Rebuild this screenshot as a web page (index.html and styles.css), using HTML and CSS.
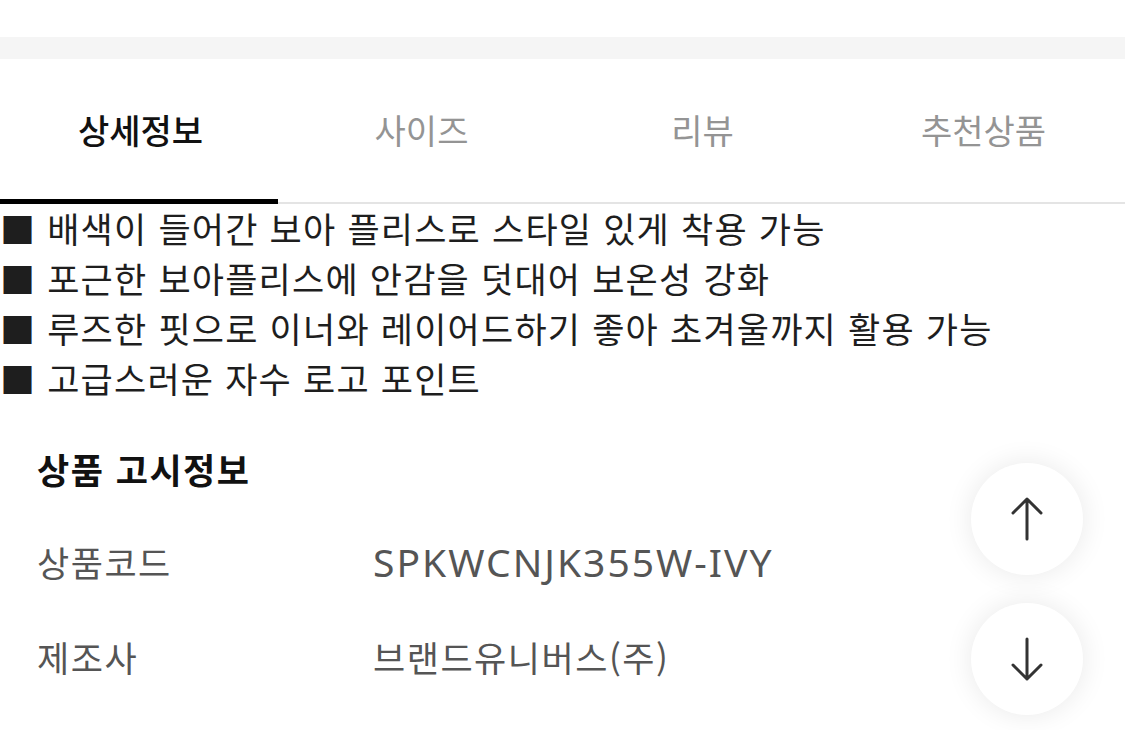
FILE: index.html
```html
<!DOCTYPE html>
<html lang="ko">
<head>
    <meta charset="UTF-8">
    <meta name="viewport" content="width=device-width, initial-scale=1.0">
    <title>상품 상세</title>
    <link rel="stylesheet" href="styles.css">
</head>
<body>

    <!-- Top spacer and divider band -->
    <div class="top-space"></div>
    <div class="band"></div>

    <!-- Tabs -->
    <nav class="tabs">
        <a class="tab active">상세정보</a>
        <a class="tab">사이즈</a>
        <a class="tab">리뷰</a>
        <a class="tab">추천상품</a>
    </nav>

    <!-- Feature list -->
    <ul class="features">
        <li>■ 배색이 들어간 보아 플리스로 스타일 있게 착용 가능</li>
        <li>■ 포근한 보아플리스에 안감을 덧대어 보온성 강화</li>
        <li>■ 루즈한 핏으로 이너와 레이어드하기 좋아 초겨울까지 활용 가능</li>
        <li>■ 고급스러운 자수 로고 포인트</li>
    </ul>

    <!-- Product notice -->
    <section class="notice">
        <h2 class="notice-title">상품 고시정보</h2>
        <div class="notice-row">
            <span class="label">상품코드</span>
            <span class="value code">SPKWCNJK355W-IVY</span>
        </div>
        <div class="notice-row">
            <span class="label">제조사</span>
            <span class="value">브랜드유니버스(주)</span>
        </div>
    </section>

    <!-- Floating scroll buttons -->
    <div class="scroll-buttons">
        <button class="scroll-btn" aria-label="위로">
            <svg width="40" height="48" viewBox="0 0 40 48" fill="none" stroke="#333" stroke-width="3" stroke-linecap="round" stroke-linejoin="round">
                <path d="M20 44V4M6 18L20 4L34 18"/>
            </svg>
        </button>
        <button class="scroll-btn" aria-label="아래로">
            <svg width="40" height="48" viewBox="0 0 40 48" fill="none" stroke="#333" stroke-width="3" stroke-linecap="round" stroke-linejoin="round">
                <path d="M20 4V44M6 30L20 44L34 30"/>
            </svg>
        </button>
    </div>

</body>
</html>
```

FILE: styles.css
```css
/* Reset and Base Styles */
* {
    margin: 0;
    padding: 0;
    box-sizing: border-box;
}

body {
    font-family: "Noto Sans CJK KR", "Noto Sans", sans-serif;
    background-color: #fff;
    color: #222;
    width: 1125px;
    height: 730px;
    overflow: hidden;
    position: relative;
}

/* Top area */
.top-space {
    height: 37px;
}

.band {
    height: 22px;
    background-color: #f5f5f5;
}

/* Tabs */
.tabs {
    display: flex;
    height: 145px;
    border-bottom: 2px solid #e4e4e4;
}

.tab {
    flex: 0 0 281px;
    display: flex;
    align-items: center;
    justify-content: center;
    font-size: 34px;
    color: #949494;
    position: relative;
    padding-bottom: 2px;
}

.tab.active {
    color: #111;
    font-weight: 500;
}

.tab.active::after {
    content: "";
    position: absolute;
    left: 0;
    right: 3px;
    bottom: -2px;
    height: 5px;
    background-color: #000;
}

/* Feature List */
.features {
    list-style: none;
    font-size: 35px;
    letter-spacing: 1.2px;
    line-height: 50px;
    color: #1e1e1e;
    margin-top: -1px;
}

/* Product Notice */
.notice {
    padding: 36px 37px 0;
}

.notice-title {
    font-size: 35px;
    letter-spacing: 1.5px;
    font-weight: 700;
    color: #111;
    line-height: 60px;
    margin-bottom: 33px;
}

.notice-row {
    display: flex;
    align-items: baseline;
    font-size: 35px;
    letter-spacing: 1.5px;
    line-height: 60px;
    color: #555;
    margin-bottom: 35px;
}

.notice-row .label {
    width: 336px;
}

.notice-row .code {
    font-family: "Noto Sans", sans-serif;
    font-size: 39px;
    letter-spacing: 2px;
}

/* Scroll Buttons */
.scroll-buttons {
    position: absolute;
    left: 971px;
    top: 463px;
    display: flex;
    flex-direction: column;
    gap: 28px;
}

.scroll-btn {
    width: 112px;
    height: 112px;
    border: none;
    border-radius: 50%;
    background-color: #fff;
    box-shadow: 0 0 28px rgba(0, 0, 0, 0.09);
    display: flex;
    align-items: center;
    justify-content: center;
}
```
